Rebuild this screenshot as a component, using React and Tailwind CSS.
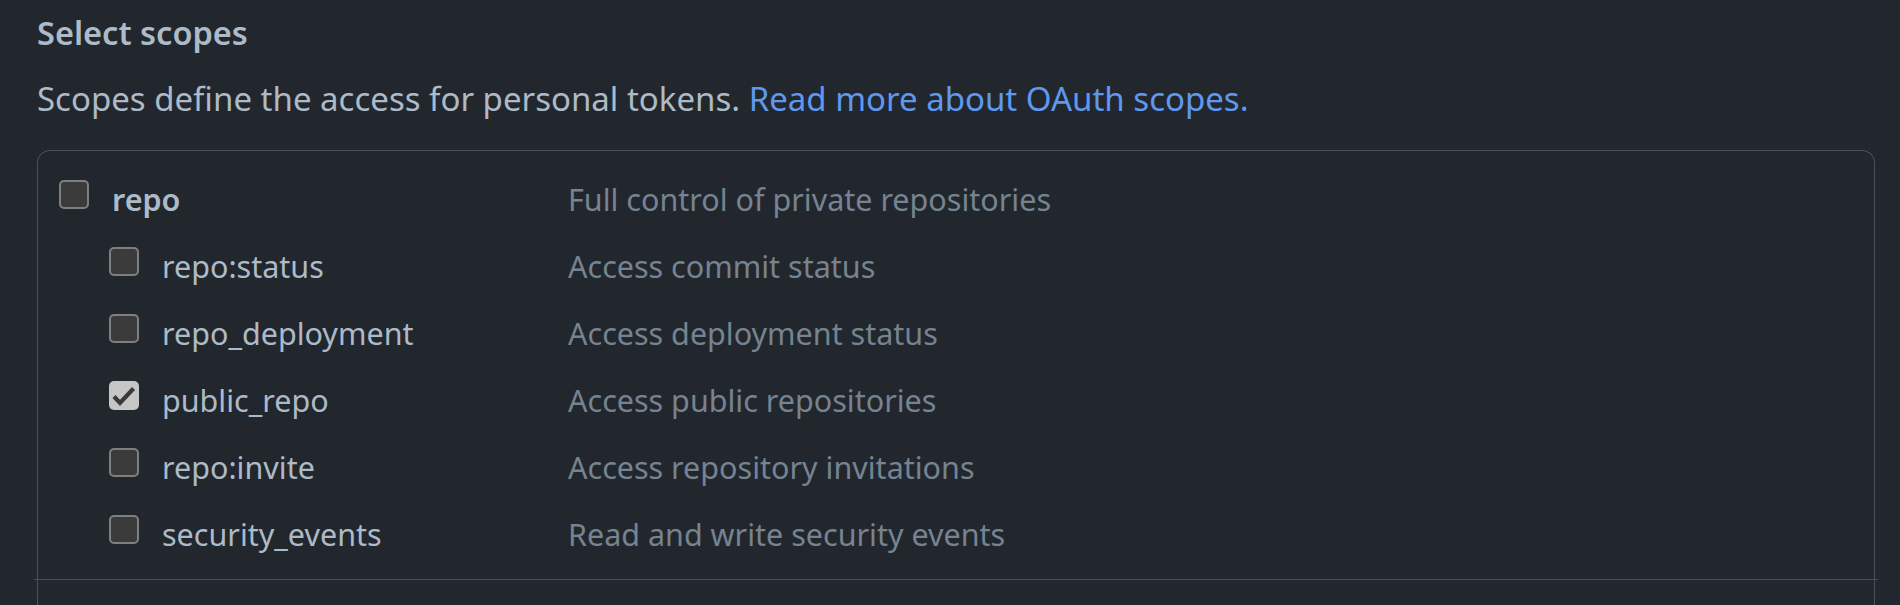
import React from "react";

const rows = [
  { name: "repo", desc: "Full control of private repositories", parent: true },
  { name: "repo:status", desc: "Access commit status" },
  { name: "repo_deployment", desc: "Access deployment status" },
  { name: "public_repo", desc: "Access public repositories", checked: true },
  { name: "repo:invite", desc: "Access repository invitations" },
  { name: "security_events", desc: "Read and write security events" },
];

function Box({ checked }) {
  if (checked) {
    return (
      <span className="mt-[14px] block h-[29px] w-[30px] shrink-0 rounded-[5px] bg-[#c6c6c6]">
        <svg viewBox="0 0 30 29" className="h-[29px] w-[30px]">
          <path d="M5 15.5 L11 22 L24.5 7.5" fill="none" stroke="#3a3a3a" strokeWidth="4.2" strokeLinecap="butt" strokeLinejoin="miter" />
        </svg>
      </span>
    );
  }
  return (
    <span className="mt-[14px] block h-[29px] w-[30px] shrink-0 rounded-[5px] border-2 border-[#7f7f7f] bg-[#3b3b3b]" />
  );
}

export default function App() {
  return (
    <div
      className="min-h-screen w-full overflow-hidden bg-[#22272e] text-[#adbac7]"
      style={{ fontFamily: '"Noto Sans", "Open Sans", sans-serif' }}
    >
      <div className="pl-[37px] pr-[25px] pt-[11px]">
        <h3 className="text-[32.5px] font-semibold leading-[44px] text-[#adbac7]">Select scopes</h3>
        <p className="mt-[22px] text-[33px] leading-[44px] text-[#adbac7]">
          Scopes define the access for personal tokens.{" "}
          <a className="text-[#5f98ee]">Read more about OAuth scopes.</a>
        </p>
        <div className="mt-[29px] h-[520px] rounded-t-[13px] border border-b-0 border-[#4a515b]">
          <div className="pl-[21px] pt-[15px]">
            {rows.map((r) => (
              <div key={r.name} className="flex h-[67px] items-start">
                <div className={`flex w-[509px] shrink-0 items-start gap-[23px] ${r.parent ? "" : "pl-[50px]"}`}>
                  <Box checked={r.checked} />
                  <span className={`text-[30.5px] leading-[67px] ${r.parent ? "font-semibold" : ""}`}>{r.name}</span>
                </div>
                <span className="text-[30.5px] leading-[67px] text-[#768390]">{r.desc}</span>
              </div>
            ))}
          </div>
          <div className="-mx-[4px] mt-[11px] border-t border-[#4a515b]" />
        </div>
      </div>
    </div>
  );
}
